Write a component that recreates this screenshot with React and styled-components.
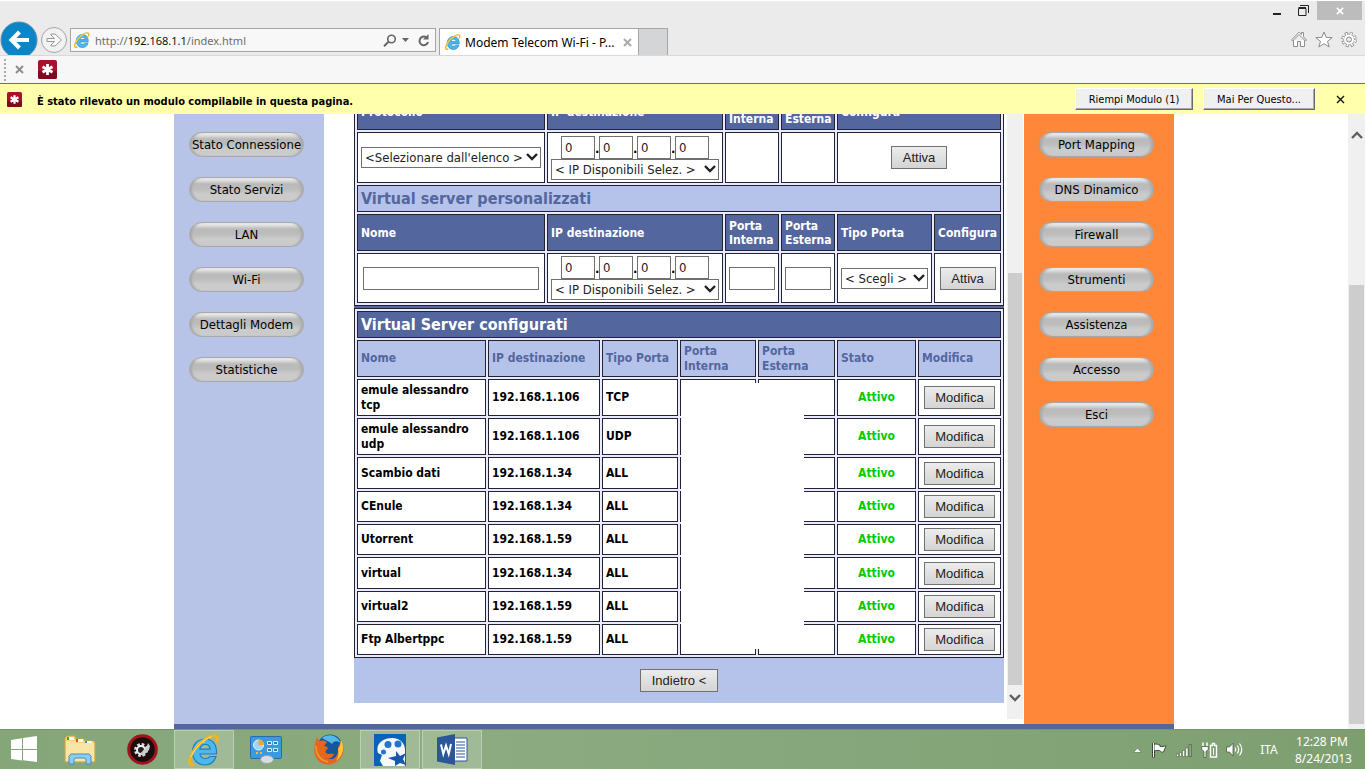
import { Fragment } from 'react';
import styled, { createGlobalStyle, css } from 'styled-components';

const tahoma = "'DejaVu Sans Condensed', 'DejaVu Sans', sans-serif";
const segoe = "'Noto Sans', 'Open Sans', sans-serif";
const arial = "'Liberation Sans', Arial, sans-serif";

const GlobalStyle = createGlobalStyle`
  * {
    box-sizing: border-box;
  }

  body {
    margin: 0;
    background: #fff;
    font-family: ${tahoma};
    font-size: 13px;
    color: #000;
  }

  svg {
    display: block;
    flex: none;
  }
`;

const Screen = styled.div`
  display: flex;
  flex-direction: column;
  height: 100vh;
  overflow: hidden;
`;

/* ---------- browser chrome ---------- */

const Chrome = styled.header`
  flex: none;
  background: #ebebeb;
  border-top: 1px solid #fff;
`;

const TitleBar = styled.div`
  display: flex;
  justify-content: flex-end;
  height: 27px;
  padding-right: 3px;
`;

const WindowButton = styled.button`
  display: grid;
  place-items: center;
  width: ${({ $close }) => ($close ? 45 : 27)}px;
  height: 19px;
  padding: 0;
  border: 0;
  background: ${({ $close }) => ($close ? '#bcbcbc' : 'none')};
`;

const NavBar = styled.div`
  display: flex;
  height: 28px;
  border-bottom: 1px solid #d9d9d9;
`;

const IconButton = styled.button`
  display: block;
  padding: 0;
  border: 0;
  background: none;
`;

const NavButtons = styled.div`
  display: flex;
  width: 70px;
  height: 34px;
  margin-top: -7px;
  overflow: hidden;
`;

const AddressBar = styled.div`
  display: flex;
  align-items: center;
  width: 366px;
  height: 24px;
  margin-right: 3px;
  padding: 0 5px 0 3px;
  gap: 5px;
  border: 1px solid #a5a5a5;
  background: #f8f8f8;
  font-family: ${segoe};
  font-size: 11px;
  color: #6d6d6d;
`;

const Url = styled.span`
  flex: 1;
  white-space: nowrap;

  b {
    font-weight: 400;
    color: #111;
  }
`;

const Tab = styled.div`
  display: flex;
  align-items: center;
  width: 200px;
  padding: 0 6px 0 5px;
  gap: 4px;
  border: 1px solid #a5a5a5;
  border-bottom: 0;
  background: #fff;
  font-family: ${segoe};
  font-size: 12px;
  white-space: nowrap;

  span {
    flex: 1;
  }
`;

const NewTab = styled.button`
  width: 29px;
  padding: 0;
  border: 1px solid #a5a5a5;
  border-width: 1px 1px 0 0;
  background: #d4d5d7;
`;

const Tools = styled.div`
  display: flex;
  align-items: flex-start;
  gap: 8px;
  margin-left: auto;
  padding: 3px 8px 0 0;
`;

const CommandBar = styled.div`
  display: flex;
  align-items: center;
  gap: 9px;
  height: 28px;
  padding-left: 4px;
  background: #f7f7f7;
  border-bottom: 1px solid #6e6e6e;
`;

const Grip = styled.span`
  height: 22px;
  border-left: 2px dotted #aaa;
`;

const PluginButton = styled(IconButton)`
  margin-left: 5px;
`;

const Notice = styled.div`
  display: flex;
  align-items: center;
  flex: none;
  gap: 10px;
  height: 30px;
  padding: 0 20px 0 7px;
  background: #ffffac;
  font-size: 11px;
  font-weight: 700;

  p {
    flex: 1;
    margin: 5px 0 0 5px;
  }
`;

const NoticeButton = styled.button`
  width: ${({ $width }) => $width}px;
  height: 22px;
  padding: 0;
  border: 1px solid;
  border-color: #fff #6a6a6a #6a6a6a #fff;
  box-shadow: inset -1px -1px #a8a8a8;
  background: #f0f0f0;
  font-family: ${tahoma};
  font-size: 11px;
`;

const NoticeClose = styled(IconButton)`
  margin-left: 11px;
`;

/* ---------- page ---------- */

const Viewport = styled.div`
  display: flex;
  flex: 1;
  min-height: 0;
  background: #fff;
`;

const Page = styled.div`
  display: grid;
  grid-template-columns: 150px minmax(0, 1fr) 150px;
  width: 1000px;
  max-width: calc(100% - 17px);
  margin: 0 auto;
  border-bottom: 5px solid #54669e;
`;

const Sidebar = styled.nav`
  display: flex;
  flex-direction: column;
  align-items: center;
  gap: 20px;
  padding: 18px 5px 0 0;
  background: ${({ $color }) => $color};
`;

const Pill = styled.a`
  width: 115px;
  height: 25px;
  border: 1px solid #a8a8a8;
  border-radius: 13px;
  background: linear-gradient(#eee 0, #e2e2e2 2px, #bababa 6px, #bcbcbc 11px, #cbcbcb 16px, #cbcbcb 100%);
  box-shadow: inset 3px 0 2px -1px #aaa, inset -3px 0 2px -1px #aaa;
  font-size: 13px;
  line-height: 23px;
  text-align: center;
  text-decoration: none;
  white-space: nowrap;
  color: #000;
`;

const Frame = styled.main`
  display: flex;
  min-height: 0;
  padding: 0 1px 5px 30px;
  overflow: hidden;
`;

const FrameContent = styled.div`
  flex: 1;
  min-width: 0;
  margin-right: 3px;
  margin-top: -24px;
`;

const Table = styled.table`
  width: 100%;
  table-layout: fixed;
  border: 1px solid #222230;
  border-spacing: 2px;
  background: #e9e9ff;
  font-size: 12px;
  font-weight: 700;
  line-height: 15px;
`;

const Separator = styled.div`
  height: 2px;
  background: #54669e;
`;

const tones = {
  dark: css`
    background: #54669e;
    color: #fff;
  `,
  light: css`
    background: #b5c3ea;
    color: #54669e;
  `,
};

const Row = styled.tr`
  height: ${({ $height }) => $height}px;
`;

const Th = styled.th`
  padding: 0 3px;
  border: 1px solid #222230;
  text-align: left;
  line-height: 14px;
  ${({ $tone }) => tones[$tone]}
`;

const TitleCell = styled(Th)`
  font-size: 16px;
  line-height: 20px;
`;

const Td = styled.td`
  padding: 0 3px;
  border: 1px solid #222230;
  background: #fff;
  text-align: ${({ $center }) => ($center ? 'center' : 'left')};
`;

const Status = styled.span`
  color: #00cc00;
`;

const Button = styled.button`
  width: ${({ $width }) => $width}px;
  height: 23px;
  padding: 0;
  border: 1px solid #707070;
  background: linear-gradient(#ececec, #d4d4d4);
  font-family: ${arial};
  font-size: 13px;
  color: #222;
  vertical-align: middle;
`;

const TextBox = styled.input`
  width: ${({ $width }) => $width}px;
  height: 23px;
  padding: 0 3px;
  border: 1px solid #707070;
  background: #fff;
  font-family: ${tahoma};
  font-size: 13px;
  color: #222;
  vertical-align: middle;
`;

const SelectBox = styled.span`
  position: relative;
  display: block;
  width: ${({ $width }) => $width}px;
  margin: 0 auto;

  select {
    display: block;
    width: 100%;
    height: 21px;
    padding: 0 3px;
    appearance: none;
    border: 1px solid #707070;
    border-radius: 0;
    background: #fff;
    font-family: ${tahoma};
    font-size: 13px;
    color: #222;
  }

  svg {
    position: absolute;
    top: 6px;
    right: 3px;
    pointer-events: none;
  }
`;

const Octets = styled.div`
  display: flex;
  justify-content: center;
  align-items: flex-end;
`;

const Dot = styled.span`
  width: 4px;
  font-size: 13px;
  line-height: 20px;
`;

const Configured = styled.div`
  position: relative;

  tbody tr:nth-child(3n) {
    height: 32px;
  }

  thead th {
    line-height: 15px;
  }
`;

// blanks out the port numbers
const Eraser = styled.div`
  position: absolute;
  top: 75px;
  bottom: 9px;
  left: 327px;
  width: 123px;
  background: #fff;
`;

const Footer = styled.div`
  display: grid;
  place-items: center;
  height: 45px;
  background: #b5c3ea;
`;

const ScrollBar = styled.div`
  display: flex;
  flex-direction: column;
  flex: none;
  width: ${({ $width }) => $width}px;
  padding: ${({ $top = 0, $bottom = 0 }) => `${$top}px 1px ${$bottom}px`};
  background: #f0f0f0;

  svg {
    margin: 0 auto;
  }
`;

const Thumb = styled.div`
  flex: 1;
  margin: ${({ $top }) => $top}px 0 ${({ $bottom }) => $bottom}px;
  background: #cdcdcd;
`;

/* ---------- taskbar ---------- */

const Taskbar = styled.footer`
  display: flex;
  flex: none;
  height: 40px;
  gap: 2px;
  border-top: 1px solid #7b9470;
  background: linear-gradient(90deg, #84a679, #8cab80 35%, #86a77b 60%, #7d9f70);
  font-family: ${segoe};
  font-size: 12px;
  color: #fff;
`;

const TaskButton = styled.button`
  display: grid;
  place-items: center;
  width: ${({ $start }) => ($start ? 48 : 60)}px;
  padding: 0;
  border: 1px solid ${({ $open }) => ($open ? '#bccfb5' : 'transparent')};
  background: ${({ $open }) => ($open ? '#a0b997' : 'none')};
`;

const Tray = styled.div`
  display: flex;
  align-items: center;
  gap: 8px;
  margin-left: auto;
  padding-right: 16px;
`;

const Lang = styled.span`
  width: 36px;
  text-align: center;
`;

const Clock = styled.time`
  width: 54px;
  line-height: 17px;
  text-align: center;
  white-space: nowrap;
`;

/* ---------- icons ---------- */

const IeIcon = ({ size = 16 }) => (
  <svg width={size} height={size} viewBox="0 0 32 32">
    <path d="M28.500 20H12c.5 3 2.500 4.500 5.500 4.500 2 0 3.500-.7 4.500-2h6C26.300 27.500 22.500 31 17 31 10 31 4.500 26 4.500 18S10.300 5 17 5c7.500 0 12 5.500 11.500 15zM22.200 15.200C21.800 12 20 10.300 17.200 10.300s-4.700 1.700-5.300 4.900z" fill="#4cb8ee" stroke="#1f7fc0" strokeWidth="1.200" />
    <path d="M8 14c1.500-4 5-6.500 9-6.500" fill="none" stroke="#b9ebfb" strokeWidth="2" />
    <path d="M6.500 30C1.500 32 .3 28.500 2.500 23 5.500 14.500 15 5 23.500 2.200 29 .4 31 3.500 28.500 9" fill="none" stroke="#f0b51c" strokeWidth="2.800" />
    <path d="M3 23C6 15 15 5.500 23.500 2.700" fill="none" stroke="#fbe27a" strokeWidth="1" />
  </svg>
);

const Asterisk = ({ size }) => (
  <svg width={size} height={size} viewBox="0 0 19 19">
    <rect width="19" height="19" rx="2" fill="#a9102d" />
    <path d="M0 11h19v6a2 2 0 0 1-2 2H2a2 2 0 0 1-2-2z" fill="#7d0b20" />
    <path d="M9.500 4v11M4.500 6.700l10 5.600M14.500 6.700l-10 5.600" stroke="#fff" strokeWidth="2.800" />
  </svg>
);

const Cross = ({ size = 9, color = '#8d8d8d', weight = 2 }) => (
  <svg width={size} height={size} viewBox="0 0 9 9">
    <path d="M1 1l7 7M8 1L1 8" stroke={color} strokeWidth={weight} />
  </svg>
);

const Chevron = ({ up, color = '#222' }) => (
  <svg width="12" height="8" viewBox="0 0 12 8">
    <path d={up ? 'M1 7l5-5 5 5' : 'M1 1l5 5 5-5'} fill="none" stroke={color} strokeWidth="2.400" />
  </svg>
);

const BackForward = () => (
  <NavButtons>
    <IconButton aria-label="Indietro">
      <svg width="40" height="34" viewBox="0 0 40 34">
        <circle cx="19" cy="19" r="18" fill="#0a86c8" stroke="#5f8ca5" />
        <path d="M29 19H12M19.500 11L11.500 19l8 8" fill="none" stroke="#fff" strokeWidth="4" />
      </svg>
    </IconButton>
    <IconButton aria-label="Avanti">
      <svg width="28" height="34" viewBox="0 0 28 34">
        <circle cx="14" cy="19" r="12.500" fill="#f2f2f2" stroke="#a5a5a5" />
        <path d="M7 17.500h7.500L11 14v-1h4l6.500 6-6.500 6h-4v-1l3.500-3.500H7z" fill="#f8f8f8" stroke="#999" />
      </svg>
    </IconButton>
  </NavButtons>
);

const ToolIcons = () => (
  <Tools>
    <IconButton aria-label="Home">
      <svg width="16" height="17" viewBox="0 0 16 17" fill="#fff" stroke="#8c8c8c">
        <path d="M2.500 9.500v6h4v-5h3v5h4v-6M.5 9L8 1.200l2.500 2.500V1.500h2v4.300L15.500 9l-1 1L8 3.500 1.500 10z" />
      </svg>
    </IconButton>
    <IconButton aria-label="Preferiti">
      <svg width="18" height="17" viewBox="0 0 18 17" fill="#fff" stroke="#8c8c8c">
        <path d="M9 1l2.200 5.400 6 .2-4.700 3.700 1.700 5.700L9 12.700 3.800 16l1.700-5.700L.8 6.600l6-.2z" />
      </svg>
    </IconButton>
    <IconButton aria-label="Impostazioni">
      <svg width="16" height="17" viewBox="0 0 16 17">
        <circle cx="8" cy="8.500" r="6.300" fill="none" stroke="#8c8c8c" strokeWidth="3" strokeDasharray="2.900 2.048" />
        <circle cx="8" cy="8.500" r="5.400" fill="#fff" stroke="#8c8c8c" strokeWidth=".8" />
        <circle cx="8" cy="8.500" r="6" fill="none" stroke="#fff" strokeWidth="2.200" strokeDasharray="1.500 3.212" strokeDashoffset="-.6" />
        <circle cx="8" cy="8.500" r="2.500" fill="#ebebeb" stroke="#8c8c8c" />
      </svg>
    </IconButton>
  </Tools>
);

const taskIcons = {
  start: (
    <svg width="28" height="27" viewBox="0 0 28 27" fill="#fff">
      <path d="M1 4l11-1.700V13H1zM13 2l14-2v13H13zM1 14h11v10.500L1 23zM13 14h14v12l-14-1.800z" />
    </svg>
  ),
  explorer: (
    <svg width="32" height="30" viewBox="0 0 32 30">
      <path d="M1 3l2-2h8l1 3h8l1 2h9l1 2v19H1z" fill="#f0d481" stroke="#c9a74d" />
      <path d="M3 2h6v3H3z" fill="#2faa3d" />
      <path d="M12 4h7v3h-7z" fill="#d4552d" />
      <path d="M21 6h7v3h-7z" fill="#3a8ad6" />
      <path d="M5 2h5v3H5zM14 4h5v3h-5zM23 6h5v3h-5z" fill="#f6f6f0" />
      <path d="M2 6h9l1 2h18v18H2z" fill="#f9e6a4" />
      <path d="M5 29v-8l2-2h18l2 2v8h-5v-5l-2-1h-8l-2 1v5z" fill="#8dcdf2" stroke="#3f8fc9" />
    </svg>
  ),
  tools: (
    <svg width="31" height="31" viewBox="0 0 31 31">
      <circle cx="15.500" cy="15.500" r="13.800" fill="#1b0d0d" stroke="#a3121a" strokeWidth="3" />
      <circle cx="14" cy="16" r="5.500" fill="none" stroke="#ddd" strokeWidth="3" strokeDasharray="2.500 1.820" />
      <circle cx="14" cy="16" r="4" fill="#222" stroke="#eee" strokeWidth="2" />
      <path d="M13 20l7-8 1-3 2 3-1 4-6 6z" fill="#ccc" />
    </svg>
  ),
  ie: <IeIcon size={32} />,
  panel: (
    <svg width="32" height="28" viewBox="0 0 32 28">
      <rect x=".5" y=".5" width="31" height="22" rx="1" fill="#3b9ade" stroke="#1f6dad" />
      <circle cx="8.500" cy="9" r="5" fill="#9fd4f6" stroke="#e6f5ff" />
      <path d="M8.500 9V3.500A5.500 5.500 0 0 1 14 9z" fill="#f0a530" />
      <path d="M17.500 5.500h4v3h-4zM23.500 5.500h4v3h-4zM17.500 12.500h4v3h-4zM23.500 12.500h4v3h-4z" fill="#1f7cc4" stroke="#d9efff" />
      <path d="M6 17h2M10 17h2" stroke="#f7b845" strokeWidth="2" />
      <ellipse cx="17" cy="23.500" rx="6.500" ry="4" fill="#d7dde0" stroke="#98a2a7" />
    </svg>
  ),
  firefox: (
    <svg width="31" height="31" viewBox="0 0 31 31">
      <circle cx="17" cy="13" r="12.500" fill="#19559b" />
      <path d="M9 4c6-5 15-3 19 5-4-3-8-2-9 1-3-3-6-3-10-6z" fill="#55b9e8" />
      <path d="M28 6c6 10 1 23-12 24.500C5 31 0 22 1.500 13 2 9 3 6 4 3c1 2 2 4 3 4 3-1 5 0 7 1l-3 4c2 0 4 1 4 3-2 0-3 2-2 4 3 2 5 0 8 1-1 4-6 6-10 4 7 4 15 0 14-10 1-3 2-4 3-8z" fill="#e5671d" />
      <path d="M28 6c4 7 2 16-5 21 2-4 3-7 2-12l2-3z" fill="#f8c63d" />
      <path d="M3 12c0 8 4 14 12 16" fill="none" stroke="#f39a32" strokeWidth="1.500" />
    </svg>
  ),
  paint: (
    <svg width="32" height="32" viewBox="0 0 32 32">
      <rect width="32" height="32" fill="#0c62b8" />
      <path d="M31 32H9l-3-5 2-6-4-2C1 10 9 4 18 4c8 0 13 5 13 12z" fill="#f5f9fc" />
      <circle cx="14" cy="10.500" r="3.500" fill="#2673cc" />
      <circle cx="24" cy="10" r="3.500" fill="#2673cc" />
      <circle cx="9.500" cy="18" r="2.500" fill="#2673cc" />
      <path d="M22 17l4 5 6-3-3 6 3 6-6-2-5 3v-5l-7-3 8-2z" fill="#1558ad" />
    </svg>
  ),
  word: (
    <svg width="31" height="31" viewBox="0 0 31 31">
      <path d="M16 4h14v23H16z" fill="#fff" stroke="#2b579a" />
      <path d="M19 8h9M19 11h9M19 14h9M19 17h9M19 20h9M19 23h9" stroke="#2b579a" />
      <path d="M0 3.500L18 0v31L0 27.500z" fill="#2b579a" />
      <path d="M4 10.500l2.300 9.500L9 11.500l2.700 8.500L14 10" fill="none" stroke="#fff" strokeWidth="2" />
    </svg>
  ),
};

const TrayIcons = () => (
  <>
    <svg width="9" height="6" viewBox="0 0 9 6">
      <path d="M.5 5.500l4-4.500 4 4.500z" fill="#fff" stroke="#50644a" strokeWidth=".6" />
    </svg>
    <svg width="18" height="16" viewBox="0 0 18 16">
      <path d="M3.500 1v14.500" stroke="#3c4d37" strokeWidth="3" />
      <path d="M4 2.500c3-1.500 4 .5 6 .5v1.500c2 .5 4-.5 6-.5l-2.500 6c-2 .5-2 0-4-1.500-2 0-3-.5-5.500.5z" fill="#fff" stroke="#3c4d37" />
      <path d="M3.500 1v14" stroke="#fff" />
    </svg>
    <svg width="17" height="14" viewBox="0 0 17 14" fill="#fff" stroke="#3c4d37" strokeWidth=".5">
      <path d="M.5 11h2v2.500h-2zM3.500 9.500h2v4h-2zM6.500 7.500h2.200v6H6.500zM9.700 5h2.300v8.500H9.700z" />
      <path d="M13 1.500h2.500v12H13z" fill="#93a78c" />
    </svg>
    <svg width="17" height="16" viewBox="0 0 17 16" fill="none" stroke="#3c4d37">
      <path d="M2 .5v4M6 .5v4" stroke="#fff" strokeWidth="1.500" />
      <path d="M.7 4.500h6.600v3L5 9.500v6H3v-6L.7 7.500z" fill="#fff" strokeWidth=".7" />
      <path d="M9.500 3.500h2v-2h2v2h2v11.500h-6z" fill="#7d9d73" stroke="#fff" strokeWidth="1.400" />
      <path d="M12.500 6v7" stroke="#fff" />
    </svg>
    <svg width="17" height="15" viewBox="0 0 17 15">
      <path d="M.5 5h3l3.500-3.700V14L3.500 10H.5z" fill="#fff" stroke="#3c4d37" strokeWidth=".7" />
      <path d="M9 5.500q1.500 2 0 4M11.200 3.500q3 4 0 8M13.500 1.500q4.500 6 0 12" fill="none" stroke="#fff" strokeWidth="1.200" />
    </svg>
  </>
);

/* ---------- data ---------- */

const leftMenu = ['Stato Connessione', 'Stato Servizi', 'LAN', 'Wi-Fi', 'Dettagli Modem', 'Statistiche'];
const rightMenu = ['Port Mapping', 'DNS Dinamico', 'Firewall', 'Strumenti', 'Assistenza', 'Accesso', 'Esci'];

const servers = [
  { name: 'emule alessandro tcp', ip: '192.168.1.106', type: 'TCP', height: 37 },
  { name: 'emule alessandro udp', ip: '192.168.1.106', type: 'UDP', height: 37 },
  { name: 'Scambio dati', ip: '192.168.1.34', type: 'ALL' },
  { name: 'CEnule', ip: '192.168.1.34', type: 'ALL' },
  { name: 'Utorrent', ip: '192.168.1.59', type: 'ALL' },
  { name: 'virtual', ip: '192.168.1.34', type: 'ALL' },
  { name: 'virtual2', ip: '192.168.1.59', type: 'ALL' },
  { name: 'Ftp Albertppc', ip: '192.168.1.59', type: 'ALL' },
];

const Col = styled.col`
  width: ${({ $width }) => $width}px;
`;

const Cols = ({ widths }) => (
  <colgroup>
    {widths.map((w, i) => (
      <Col key={i} $width={w} />
    ))}
  </colgroup>
);

const Select = ({ label, width, text }) => (
  <SelectBox $width={width}>
    <select aria-label={label}>
      <option>{text}</option>
    </select>
    <Chevron />
  </SelectBox>
);

const IpPicker = () => (
  <>
    <Octets>
      {[1, 2, 3, 4].map((n) => (
        <Fragment key={n}>
          {n > 1 && <Dot>.</Dot>}
          <TextBox $width={34} defaultValue="0" aria-label={`IP ${n}`} />
        </Fragment>
      ))}
    </Octets>
    <Select label="IP disponibili" width={168} text="< IP Disponibili Selez. >" />
  </>
);

const NewServerTable = () => (
  <Table>
    <Cols widths={[188, 176, 54, 54, 95, 67]} />
    <tbody>
      <Row $height={37}>
        <Th $tone="dark">Protocollo</Th>
        <Th $tone="dark">IP destinazione</Th>
        <Th $tone="dark">Porta Interna</Th>
        <Th $tone="dark">Porta Esterna</Th>
        <Th $tone="dark" colSpan={2}>Configura</Th>
      </Row>
      <Row $height={51}>
        <Td><Select label="Protocollo" width={180} text="<Selezionare dall'elenco >" /></Td>
        <Td><IpPicker /></Td>
        <Td />
        <Td />
        <Td $center colSpan={2}><Button $width={56}>Attiva</Button></Td>
      </Row>
      <Row $height={27}>
        <TitleCell $tone="light" colSpan={6}>Virtual server personalizzati</TitleCell>
      </Row>
      <Row $height={37}>
        <Th $tone="dark">Nome</Th>
        <Th $tone="dark">IP destinazione</Th>
        <Th $tone="dark">Porta Interna</Th>
        <Th $tone="dark">Porta Esterna</Th>
        <Th $tone="dark">Tipo Porta</Th>
        <Th $tone="dark">Configura</Th>
      </Row>
      <Row $height={50}>
        <Td $center><TextBox $width={176} aria-label="Nome" /></Td>
        <Td><IpPicker /></Td>
        <Td $center><TextBox $width={46} aria-label="Porta interna" /></Td>
        <Td $center><TextBox $width={46} aria-label="Porta esterna" /></Td>
        <Td><Select label="Tipo porta" width={87} text="< Scegli >" /></Td>
        <Td $center><Button $width={56}>Attiva</Button></Td>
      </Row>
    </tbody>
  </Table>
);

const ConfiguredTable = () => (
  <Configured>
    <Table>
      <Cols widths={[129, 112, 76, 76, 77, 79, 83]} />
      <thead>
        <Row $height={27}>
          <TitleCell $tone="dark" colSpan={7}>Virtual Server configurati</TitleCell>
        </Row>
        <Row $height={37}>
          {['Nome', 'IP destinazione', 'Tipo Porta', 'Porta Interna', 'Porta Esterna', 'Stato', 'Modifica'].map((h) => (
            <Th key={h} $tone="light">{h}</Th>
          ))}
        </Row>
      </thead>
      <tbody>
        {servers.map((s) => (
          <Row key={s.name} $height={s.height || 31}>
            <Td>{s.name}</Td>
            <Td>{s.ip}</Td>
            <Td>{s.type}</Td>
            <Td />
            <Td />
            <Td $center><Status>Attivo</Status></Td>
            <Td $center><Button $width={71}>Modifica</Button></Td>
          </Row>
        ))}
      </tbody>
    </Table>
    <Eraser />
  </Configured>
);

const Menu = ({ items, color }) => (
  <Sidebar $color={color}>
    {items.map((item) => (
      <Pill key={item} href="#">{item}</Pill>
    ))}
  </Sidebar>
);

export default function App() {
  return (
    <Screen>
      <GlobalStyle />
      <Chrome>
        <TitleBar>
          <WindowButton aria-label="Riduci">
            <svg width="8" height="11"><path d="M0 9h8" stroke="#222" strokeWidth="2" /></svg>
          </WindowButton>
          <WindowButton aria-label="Ripristina">
            <svg width="11" height="11" fill="none" stroke="#222">
              <path d="M2 .5h8.500V8M.5 3.500h7.500v7H.5zM.5 2.500h7.500" />
            </svg>
          </WindowButton>
          <WindowButton $close aria-label="Chiudi"><Cross size={8} color="#fff" /></WindowButton>
        </TitleBar>
        <NavBar>
          <BackForward />
          <AddressBar>
            <IeIcon />
            <Url>http://<b>192.168.1.1</b>/index.html</Url>
            <svg width="14" height="13" viewBox="0 0 14 13" fill="none" stroke="#666" strokeWidth="1.600">
              <circle cx="8.500" cy="5" r="3.800" />
              <path d="M5.500 7.800L1 12.200" strokeWidth="2" />
            </svg>
            <svg width="7" height="4"><path d="M0 0h7L3.500 4z" fill="#666" /></svg>
            <svg width="16" height="13" viewBox="-4 0 16 13" fill="none" stroke="#666" strokeWidth="2">
              <path d="M8 3.200A4.300 4.300 0 1 0 10 8" />
              <path d="M10.500 0v5.500H5z" fill="#666" stroke="none" />
            </svg>
          </AddressBar>
          <Tab>
            <IeIcon />
            <span>Modem Telecom Wi-Fi - P...</span>
            <IconButton aria-label="Chiudi scheda"><Cross color="#aaa" /></IconButton>
          </Tab>
          <NewTab aria-label="Nuova scheda" />
          <ToolIcons />
        </NavBar>
        <CommandBar>
          <Grip />
          <IconButton aria-label="Chiudi barra"><Cross /></IconButton>
          <PluginButton aria-label="Password"><Asterisk size={19} /></PluginButton>
        </CommandBar>
      </Chrome>

      <Notice>
        <Asterisk size={15} />
        <p>È stato rilevato un modulo compilabile in questa pagina.</p>
        <NoticeButton $width={118}>Riempi Modulo (1)</NoticeButton>
        <NoticeButton $width={112}>Mai Per Questo...</NoticeButton>
        <NoticeClose aria-label="Chiudi avviso">
          <Cross color="#111" weight={1.4} />
        </NoticeClose>
      </Notice>

      <Viewport>
        <Page>
          <Menu items={leftMenu} color="#b7c4e8" />
          <Frame>
            <FrameContent>
              <NewServerTable />
              <Separator />
              <ConfiguredTable />
              <Footer><Button $width={78}>Indietro &lt;</Button></Footer>
            </FrameContent>
            <ScrollBar $width={16} $bottom={17}>
              <Thumb $top={159} $bottom={9} />
              <Chevron color="#606060" />
            </ScrollBar>
          </Frame>
          <Menu items={rightMenu} color="#ff873a" />
        </Page>
        <ScrollBar $width={17} $top={17}>
          <Chevron up color="#606060" />
          <Thumb $top={146} $bottom={5} />
        </ScrollBar>
      </Viewport>

      <Taskbar>
        <TaskButton $start aria-label="Start">{taskIcons.start}</TaskButton>
        <TaskButton aria-label="Esplora file">{taskIcons.explorer}</TaskButton>
        <TaskButton aria-label="Strumenti">{taskIcons.tools}</TaskButton>
        <TaskButton $open aria-label="Internet Explorer">{taskIcons.ie}</TaskButton>
        <TaskButton aria-label="Pannello">{taskIcons.panel}</TaskButton>
        <TaskButton aria-label="Firefox">{taskIcons.firefox}</TaskButton>
        <TaskButton $open aria-label="Disegno">{taskIcons.paint}</TaskButton>
        <TaskButton $open aria-label="Word">{taskIcons.word}</TaskButton>
        <Tray>
          <TrayIcons />
          <Lang>ITA</Lang>
          <Clock>12:28 PM<br />8/24/2013</Clock>
        </Tray>
      </Taskbar>
    </Screen>
  );
}
